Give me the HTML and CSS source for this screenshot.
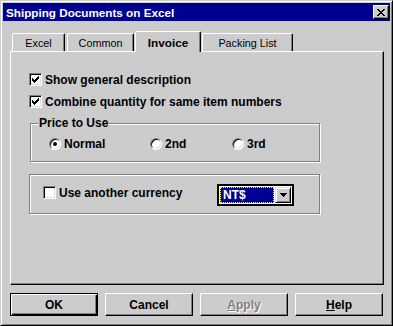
FILE: index.html
```html
<!DOCTYPE html>
<html>
<head>
<meta charset="utf-8">
<link rel="stylesheet" href="styles.css">
</head>
<body>
<div class="window">
  <div class="titlebar">
    <span class="title">Shipping Documents on Excel</span>
    <div class="close">
      <svg width="8" height="7" viewBox="0 0 8 7" shape-rendering="crispEdges"><path fill="#000" d="M0 0h2v1h-2z M6 0h2v1h-2z M1 1h2v1h-2z M5 1h2v1h-2z M2 2h4v1h-4z M3 3h2v1h-2z M2 4h4v1h-4z M1 5h2v1h-2z M5 5h2v1h-2z M0 6h2v1h-2z M6 6h2v1h-2z"/></svg>
    </div>
  </div>
  <div class="tabs">
    <div class="tab tab-excel">Excel</div>
    <div class="tab tab-common">Common</div>
    <div class="tab tab-invoice active">Invoice</div>
    <div class="tab tab-packing">Packing List</div>
  </div>
  <div class="panel">
    <div class="check row-first">
      <span class="box"><svg width="7" height="7" viewBox="0 0 7 7" shape-rendering="crispEdges"><path fill="#000" d="M0 2h1v3h-1z M1 3h1v3h-1z M2 4h1v3h-1z M3 3h1v3h-1z M4 2h1v3h-1z M5 1h1v3h-1z M6 0h1v3h-1z"/></svg></span>
      <span>Show general description</span>
    </div>
    <div class="check row-second">
      <span class="box"><svg width="7" height="7" viewBox="0 0 7 7" shape-rendering="crispEdges"><path fill="#000" d="M0 2h1v3h-1z M1 3h1v3h-1z M2 4h1v3h-1z M3 3h1v3h-1z M4 2h1v3h-1z M5 1h1v3h-1z M6 0h1v3h-1z"/></svg></span>
      <span>Combine quantity for same item numbers</span>
    </div>
    <div class="group group-price">
      <div class="legend">Price to Use</div>
      <div class="radios">
        <div class="radio opt-normal"><span class="circle"><span class="dot"></span></span><span>Normal</span></div>
        <div class="radio opt-2nd"><span class="circle"></span><span>2nd</span></div>
        <div class="radio opt-3rd"><span class="circle"></span><span>3rd</span></div>
      </div>
    </div>
    <div class="group group-currency">
      <div class="check cur-check">
        <span class="box"></span>
        <span>Use another currency</span>
      </div>
      <div class="combo">
        <div class="combo-value">NT$</div>
        <div class="combo-btn"><svg width="7" height="4" viewBox="0 0 7 4" shape-rendering="crispEdges"><path fill="#000" d="M0 0h7v1h-7z M1 1h5v1h-5z M2 2h3v1h-3z M3 3h1v1h-1z"/></svg></div>
      </div>
    </div>
  </div>
  <div class="buttons">
    <div class="btn default">OK</div>
    <div class="btn">Cancel</div>
    <div class="btn disabled"><span><u>A</u>pply</span></div>
    <div class="btn"><span><u>H</u>elp</span></div>
  </div>
</div>
</body>
</html>
```
FILE: styles.css
```css
* { box-sizing: border-box; }

body {
  margin: 0;
  width: 393px;
  height: 326px;
  font-family: "Liberation Sans", Arial, sans-serif;
  font-weight: bold;
  font-size: 12px;
  color: #000;
}

.window {
  width: 393px;
  height: 326px;
  background: #cccccc;
  border: 1px solid;
  border-color: #cccccc #000 #000 #cccccc;
  box-shadow: inset 1px 1px #fff, inset -1px -1px #808080;
  padding: 2px;
  display: flex;
  flex-direction: column;
}

.titlebar {
  height: 18px;
  background: #000090;
  color: #fff;
  display: flex;
  align-items: center;
  justify-content: space-between;
  padding: 0 1px 0 3px;
  font-size: 11.7px;
}

.close {
  width: 16px;
  height: 14px;
  background: #cccccc;
  border: 1px solid;
  border-color: #fff #000 #000 #fff;
  box-shadow: inset -1px -1px #808080;
  display: flex;
  align-items: center;
  justify-content: center;
}

.tabs {
  display: flex;
  align-items: flex-end;
  height: 20px;
  margin-top: 10px;
  padding-left: 9px;
}

.tab {
  height: 18px;
  border: 1px solid;
  border-bottom: none;
  border-color: #fff #000 transparent #fff;
  border-radius: 2px 2px 0 0;
  box-shadow: inset -1px 0 #808080;
  font-weight: normal;
  font-size: 10.8px;
  display: flex;
  align-items: center;
  justify-content: center;
  background: #cccccc;
}

.tab-excel { width: 53px; }
.tab-common { width: 67px; margin-left: 2px; }
.tab-invoice { width: 66px; margin-left: 1px; }
.tab-packing { width: 91px; margin-left: 1px; }

.tab.active {
  height: 21px;
  margin-bottom: -1px;
  padding-top: 1px;
  position: relative;
  z-index: 1;
  font-weight: bold;
  font-size: 11.8px;
}

.panel {
  width: 374px;
  height: 234px;
  margin-left: 7px;
  border: 1px solid;
  border-color: #fff #000 #000 #fff;
  box-shadow: inset -1px -1px #808080;
  padding: 19px 0 0 18px;
}

.check {
  display: flex;
  align-items: center;
  height: 17px;
  gap: 3px;
  white-space: nowrap;
}

.row-second { margin-top: 5px; }

.box {
  flex: none;
  width: 13px;
  height: 13px;
  background: #fff;
  border: 1px solid;
  border-color: #808080 #fff #fff #808080;
  box-shadow: inset 1px 1px #000, inset -1px -1px #dfdfdf;
  display: flex;
  align-items: center;
  justify-content: center;
}

.group {
  border: 1px solid #808080;
  box-shadow: inset 1px 1px #fff, 1px 1px #fff;
}

.group-price {
  width: 290px;
  height: 39px;
  margin-top: 13px;
  margin-left: 1px;
}

.legend {
  width: max-content;
  margin-top: -8px;
  margin-left: 7px;
  padding: 0 1px;
  line-height: 14px;
  background: #cccccc;
}

.radios {
  display: flex;
  align-items: center;
  height: 13px;
  margin-top: 7px;
  padding-left: 18px;
}

.radio {
  display: flex;
  align-items: center;
  gap: 3px;
}

.opt-normal { width: 101px; }
.opt-2nd { width: 82px; }

.circle {
  flex: none;
  width: 12px;
  height: 12px;
  border-radius: 50%;
  background: #fff;
  border: 1px solid;
  border-color: #808080 #fff #fff #808080;
  box-shadow: inset 1px 1px #000, inset -1px -1px #dfdfdf;
  display: flex;
  align-items: center;
  justify-content: center;
}

.dot {
  width: 4px;
  height: 4px;
  border-radius: 50%;
  background: #000;
}

.group-currency {
  width: 291px;
  height: 40px;
  margin-top: 12px;
  display: flex;
  align-items: flex-start;
  padding: 9px 0 0 13px;
}

.cur-check { width: 174px; }

.combo {
  width: 77px;
  height: 22px;
  border: 2px solid #000;
  padding: 1px;
  background: #fff;
  display: flex;
  gap: 1px;
}

.combo-value {
  width: 54px;
  height: 16px;
  background: #000090;
  color: #fff;
  outline: 1px dotted #ffff00;
  outline-offset: -1px;
  padding-left: 3px;
  line-height: 16px;
}

.combo-btn {
  width: 16px;
  height: 16px;
  background: #cccccc;
  border: 1px solid;
  border-color: #dfdfdf #000 #000 #dfdfdf;
  box-shadow: inset 1px 1px #fff, inset -1px -1px #808080;
  display: flex;
  align-items: center;
  justify-content: center;
}

.buttons {
  display: flex;
  gap: 7px;
  margin-top: 8px;
  padding-left: 7px;
}

.btn {
  width: 88px;
  height: 23px;
  background: #cccccc;
  border: 1px solid;
  border-color: #fff #000 #000 #fff;
  box-shadow: inset -1px -1px #808080;
  display: flex;
  align-items: center;
  justify-content: center;
}

.btn.default {
  border-color: #000;
  box-shadow: inset 1px 1px #fff, inset -1px -1px #000, inset -2px -2px #808080;
}

.btn.disabled {
  color: #808080;
  text-shadow: 1px 1px #fff;
}
```
